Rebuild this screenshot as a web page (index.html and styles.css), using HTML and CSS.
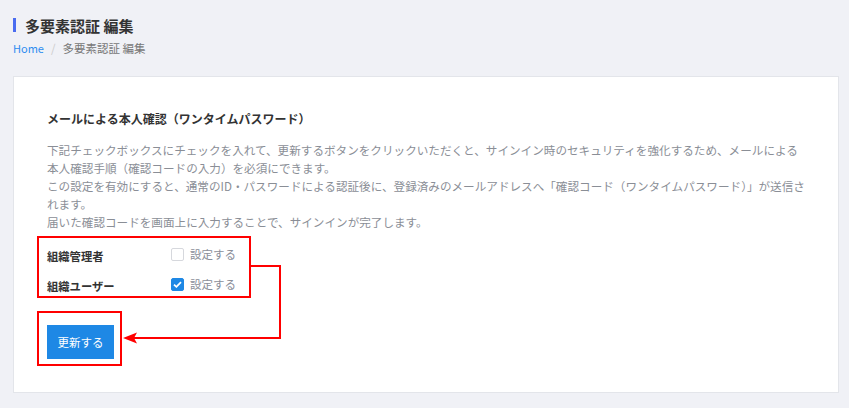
FILE: index.html
```html
<!DOCTYPE html>
<html lang="ja">
<head>
<meta charset="utf-8">
<link rel="stylesheet" href="styles.css">
</head>
<body>
<div class="page">
  <header class="page-header">
    <h1 class="page-title">多要素認証 編集</h1>
    <nav class="breadcrumb"><a class="crumb-link" href="#">Home</a><span class="crumb-sep">/</span><span class="crumb-current">多要素認証 編集</span></nav>
  </header>
  <section class="card">
    <h2 class="card-heading">メールによる本人確認（ワンタイムパスワード）</h2>
    <p class="desc">下記チェックボックスにチェックを入れて、更新するボタンをクリックいただくと、サインイン時のセキュリティを強化するため、メールによる本人確認手順（確認コードの入力）を必須にできます。<br>この設定を有効にすると、通常のID・パスワードによる認証後に、登録済みのメールアドレスへ「確認コード（ワンタイムパスワード）」が送信されます。<br>届いた確認コードを画面上に入力することで、サインインが完了します。</p>
    <div class="form-area">
      <div class="mark mark-options">
        <div class="opt-row">
          <span class="opt-label">組織管理者</span>
          <label class="check"><span class="box"></span><span class="check-text">設定する</span></label>
        </div>
        <div class="opt-row">
          <span class="opt-label">組織ユーザー</span>
          <label class="check"><span class="box checked"><svg width="9" height="7" viewBox="0 0 9 7"><path d="M1 3.6 L3.4 5.8 L8 1.2" fill="none" stroke="#fff" stroke-width="1.8"/></svg></span><span class="check-text">設定する</span></label>
        </div>
      </div>
      <div class="mark mark-button">
        <button class="btn-primary">更新する</button>
      </div>
      <svg class="connector" width="250" height="112" viewBox="0 0 250 112">
        <polyline points="212,30 243,30 243,102 96,102" fill="none" stroke="#ff0000" stroke-width="2"/>
        <polygon points="86,102 100,96.5 97,102 100,107.5" fill="#ff0000"/>
      </svg>
    </div>
  </section>
</div>
</body>
</html>
```
FILE: styles.css
```css
html, body {
  margin: 0;
  padding: 0;
}
body {
  background: #f0f1f6;
  font-family: "Noto Sans CJK JP", "Noto Sans", sans-serif;
  color: #333;
}
.page {
  padding: 15px 10px 14px 13px;
}
.page-header {
  display: flex;
  flex-direction: column;
}
.page-title {
  margin: 0;
  font-size: 15px;
  font-weight: 700;
  line-height: 22px;
  color: #333;
  padding-left: 12px;
  position: relative;
}
.page-title::before {
  content: "";
  position: absolute;
  left: 0;
  top: 3px;
  width: 3px;
  height: 14px;
  background: #4a6cf0;
}
.breadcrumb {
  margin-top: 2px;
  font-size: 11.5px;
  line-height: 18px;
  color: #777;
}
.crumb-link {
  color: #2d8cf0;
  text-decoration: none;
  font-size: 11px;
}
.crumb-sep {
  color: #ccc;
  margin: 0 7px;
}
.card {
  margin-top: 19px;
  background: #fff;
  border: 1px solid #e3e5ea;
  height: 317px;
  box-sizing: border-box;
  padding: 32px 31px 0 33px;
}
.card-heading {
  margin: 0;
  font-size: 12px;
  font-weight: 700;
  line-height: 20px;
  color: #333;
}
.desc {
  margin: 12px 0 0 0;
  font-size: 11.6px;
  line-height: 18px;
  color: #8a8e96;
}
.form-area {
  position: relative;
  margin-left: -10px;
  margin-top: 5px;
}
.mark {
  border: 2px solid #ff0000;
  box-sizing: border-box;
}
.mark-options {
  width: 214px;
  padding: 3px 0 0 8px;
  height: 62px;
}
.opt-row {
  display: flex;
  align-items: center;
  height: 26px;
  margin-bottom: 4px;
}
.opt-label {
  width: 124px;
  font-size: 11.3px;
  font-weight: 700;
  color: #333;
  padding-top: 3px;
}
.check {
  display: flex;
  align-items: center;
}
.box {
  width: 13px;
  height: 13px;
  box-sizing: border-box;
  border: 1px solid #d6d8dd;
  border-radius: 2px;
  background: #fff;
  display: flex;
  align-items: center;
  justify-content: center;
}
.box.checked {
  background: #1e88e5;
  border-color: #1e88e5;
}
.check-text {
  margin-left: 6px;
  font-size: 11.5px;
  color: #8a8e99;
}
.mark-button {
  margin-top: 13px;
  width: 85px;
  height: 55px;
  padding: 12px 0 0 8px;
}
.btn-primary {
  display: block;
  width: 67px;
  height: 34px;
  border: none;
  background: #1e88e5;
  color: #fff;
  font-family: "Noto Sans CJK JP", "Noto Sans", sans-serif;
  font-size: 11.5px;
  padding: 0;
}
.connector {
  position: absolute;
  left: 0;
  top: 0;
}
```
